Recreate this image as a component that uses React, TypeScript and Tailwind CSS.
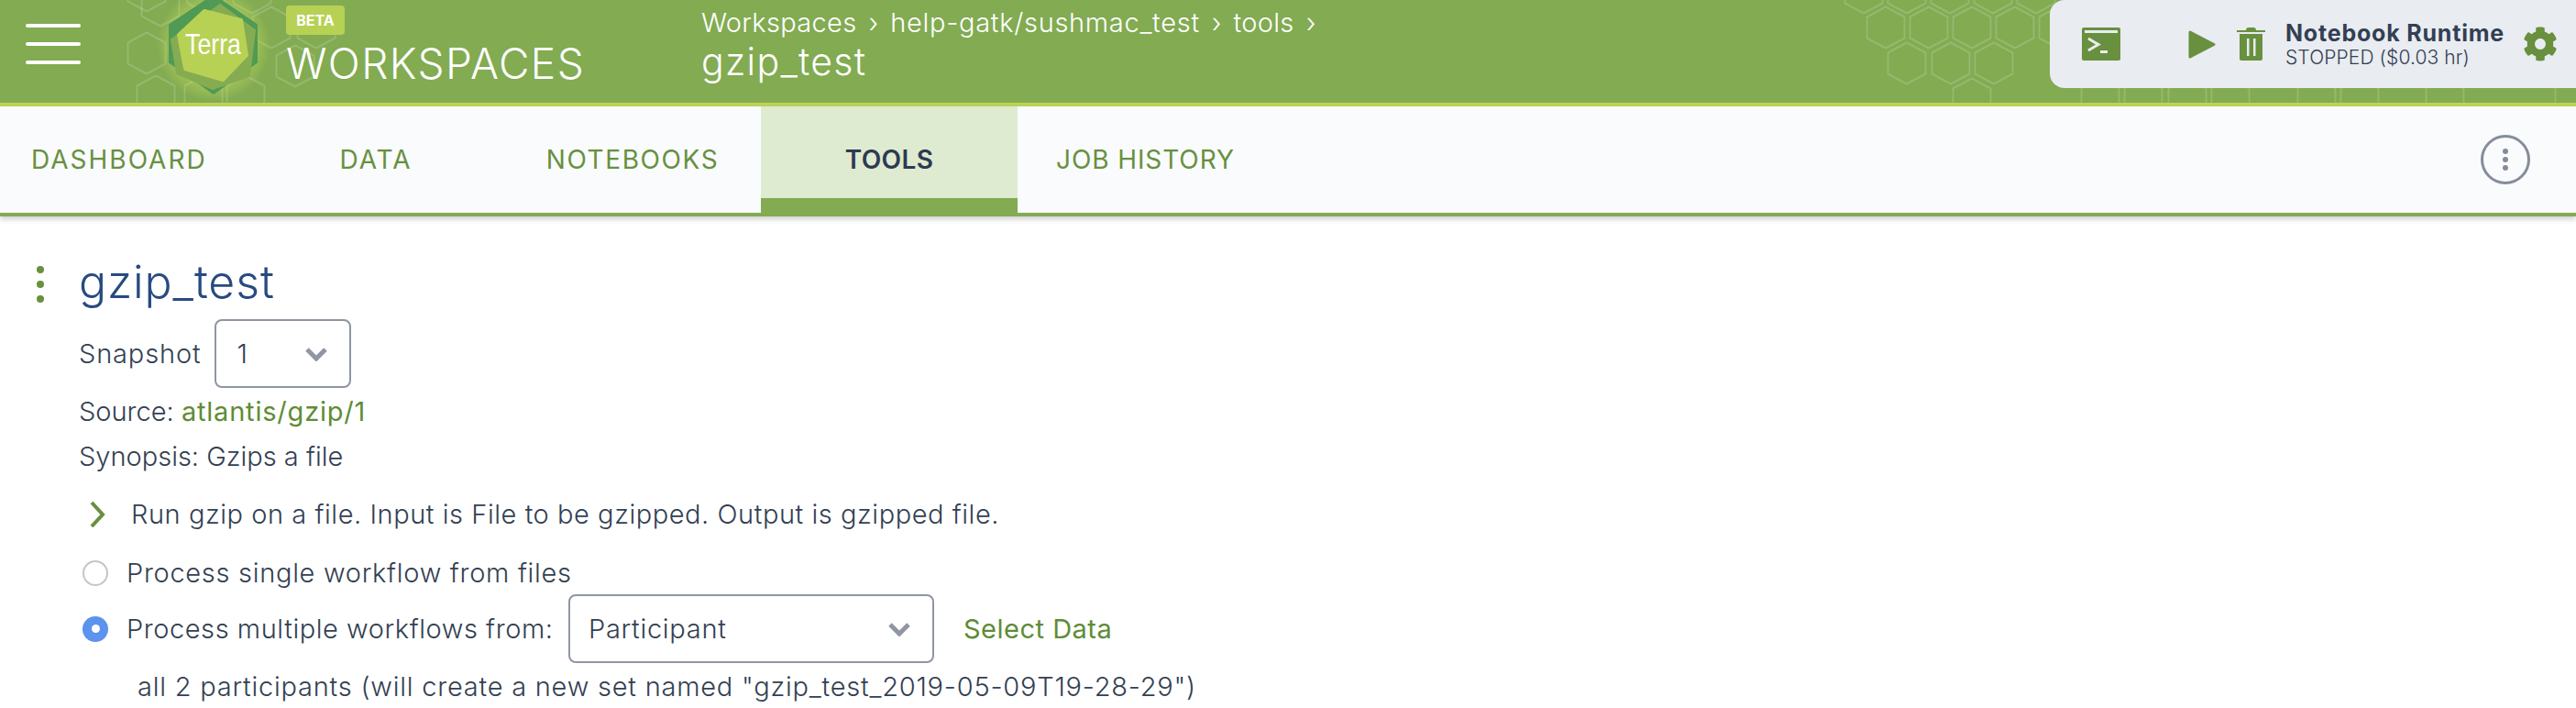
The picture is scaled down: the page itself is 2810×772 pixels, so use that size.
import React from "react";
import { FaCog } from "react-icons/fa";

const rightHexes: [number, number][] = [
  [2033, -8], [2080, -8], [2127, -8], [2174, -8], [2221, -8],
  [2057, 30], [2104, 30], [2151, 30], [2198, 30], [2245, 30],
  [2080, 69], [2128, 69], [2175, 69],
  [2151, 108], [2291, 108], [2338, 108], [2386, 108], [2433, 108], [2527, 108], [2574, 108], [2667, 108], [2808, 108],
];
const leftHexes: [number, number][] = [
  [160, 58], [160, -10], [170, 105], [222, 105], [268, 105], [296, 30], [345, 30], [322, 72], [275, -8], [225, -8], [175, 6],
];

function hexPath(cx: number, cy: number) {
  const w = 20.5, h = 22.5, s = 11;
  return `M${cx} ${cy - h}L${cx + w} ${cy - h + s}V${cy + h - s}L${cx} ${cy + h}L${cx - w} ${cy + h - s}V${cy - h + s}Z`;
}

function Chevron({ className }: { className: string }) {
  return (
    <svg viewBox="0 0 24 16" className={className} fill="none" stroke="#9096a3" strokeWidth="5">
      <path d="M2 3l10 10L22 3" />
    </svg>
  );
}

function Logo() {
  return (
    <svg viewBox="0 0 130 116" className="w-[130px] h-[116px] shrink-0">
      <defs>
        <radialGradient id="glow">
          <stop offset="0.65" stopColor="#c7dd5c" stopOpacity="0.55" />
          <stop offset="1" stopColor="#c7dd5c" stopOpacity="0" />
        </radialGradient>
      </defs>
      <circle cx="67" cy="52" r="62" fill="url(#glow)" />
      <path d="M67 -2L114 30V71L67 105L19 71V30Z" fill="#4f9a55" stroke="#4f9a55" strokeWidth="2" strokeLinejoin="round" />
      <path d="M74 8L112 36L106 86L66 100L27 83L21 46Z" fill="#86ac52" stroke="#86ac52" strokeWidth="2" strokeLinejoin="round" />
      <path d="M57 15L97 25L103 63L77 90L36 78L29 41Z" fill="#b7d155" stroke="#b7d155" strokeWidth="4" strokeLinejoin="round" />
      <text x="36" y="62" fill="#ffffff" fontSize="32" textLength="61" lengthAdjust="spacingAndGlyphs" style={{ fontFamily: '"Liberation Sans Narrow","Liberation Sans",sans-serif' }}>Terra</text>
    </svg>
  );
}

export default function App() {
  return (
    <div className="w-[2810px] h-[772px] overflow-hidden bg-white text-[#333f52] font-['Inter','Liberation_Sans',sans-serif] font-light">
      <header className="relative h-[116px] bg-[#82ab52] border-b-4 border-[#bfd355] text-white flex items-start overflow-hidden">
        <svg className="absolute inset-0 w-[2810px] h-[112px]" viewBox="0 0 2810 112" fill="none" stroke="#ffffff" strokeOpacity="0.16" strokeWidth="2" strokeLinejoin="round">
          {[...rightHexes, ...leftHexes].map(([x, y]) => (
            <path key={`${x}-${y}`} d={hexPath(x, y)} />
          ))}
        </svg>
        <div className="relative ml-[28px] mt-[26px] w-[60px] flex flex-col gap-4 shrink-0">
          <div className="h-1 rounded-sm bg-white" />
          <div className="h-1 rounded-sm bg-white" />
          <div className="h-1 rounded-sm bg-white" />
        </div>
        <div className="relative ml-[78px] mt-0 -translate-y-[3px]"><Logo /></div>
        <div className="relative ml-[16px] mt-[6px] w-[340px] shrink-0 flex flex-col items-start">
          <div className="w-[64px] h-[32px] rounded bg-[#b7d155] text-[16px] font-bold flex items-center justify-center">BETA</div>
          <div className="mt-[4px] text-[46px] leading-[54px] whitespace-nowrap font-light tracking-[1.4px]">WORKSPACES</div>
        </div>
        <div className="relative ml-[113px] mt-[7px] flex flex-col">
          <div className="flex items-center text-[29px] leading-[36px] tracking-[0.3px] font-light whitespace-nowrap">
            <span>Workspaces</span><span className="mx-[13px]">›</span><span className="tracking-[0.7px]">help-gatk/sushmac_test</span><span className="mx-[13px]">›</span><span>tools</span><span className="ml-[13px]">›</span>
          </div>
          <div className="text-[41px] leading-[48px] font-light tracking-[1.3px]">gzip_test</div>
        </div>
        <div className="relative ml-auto w-[574px] h-[96px] bg-[#e9ecf1] rounded-l-2xl flex items-center">
          <svg viewBox="0 0 42 36" className="ml-[35px] w-[42px] h-[36px] shrink-0">
            <rect width="42" height="36" rx="2" fill="#68903e" />
            <rect x="3" y="3" width="36" height="3" fill="#e9ecf1" />
            <path d="M7 12l11 6.5L7 25" fill="none" stroke="#e9ecf1" strokeWidth="3" />
            <rect x="20" y="25" width="8" height="3" fill="#e9ecf1" />
          </svg>
          <svg viewBox="0 0 30 31" className="ml-[74px] w-[30px] h-[31px] shrink-0">
            <path d="M2 2L28 15.5L2 29Z" fill="#68903e" stroke="#68903e" strokeWidth="3" strokeLinejoin="round" />
          </svg>
          <svg viewBox="0 0 31 36" className="ml-[23px] w-[31px] h-[36px] shrink-0">
            <path d="M10 3q0-3 3-3h5q3 0 3 3h10v2H0V3ZM3 7h25v27q0 2-2 2H5q-2 0-2-2Z" fill="#68903e" />
            <rect x="11" y="12" width="2.5" height="19" fill="#e9ecf1" />
            <rect x="18" y="12" width="2.5" height="19" fill="#e9ecf1" />
          </svg>
          <div className="ml-[22px] flex flex-col text-[#333f52] w-[244px] shrink-0">
            <div className="text-[25px] leading-[30px] font-bold whitespace-nowrap tracking-[0.8px]">Notebook Runtime</div>
            <div className="text-[21px] leading-[24px] font-light whitespace-nowrap tracking-[0.1px]">STOPPED ($0.03 hr)</div>
          </div>
          <FaCog className="ml-[15px] w-[38px] h-[38px] text-[#68903e] shrink-0" />
        </div>
      </header>

      <nav className="h-[120px] bg-[#f9fbfd] border-b-4 border-[#82ab52] shadow-[0_3px_6px_rgba(0,0,0,0.2)] flex items-stretch text-[#68903e] text-[28px] tracking-[2px] font-normal relative">
        <div className="w-[270px] pl-[34px] flex items-center">DASHBOARD</div>
        <div className="w-[280px] flex items-center justify-center">DATA</div>
        <div className="w-[280px] flex items-center justify-center tracking-[1.6px]">NOTEBOOKS</div>
        <div className="w-[280px] bg-[#deebd1] border-b-[16px] border-[#82ab52] pt-[16px] flex items-center justify-center font-semibold text-[#2e3a50] tracking-[0.4px]">TOOLS</div>
        <div className="pl-[42px] flex items-center tracking-[0.9px]">JOB HISTORY</div>
        <div className="ml-auto mr-[50px] self-center w-[54px] h-[54px] rounded-full border-[3px] border-[#858c9b] flex flex-col items-center justify-center gap-[3px]">
          <span className="w-[6px] h-[6px] rounded-full bg-[#858c9b]" />
          <span className="w-[6px] h-[6px] rounded-full bg-[#858c9b]" />
          <span className="w-[6px] h-[6px] rounded-full bg-[#858c9b]" />
        </div>
      </nav>

      <main className="text-[29px] tracking-[0.7px]">
        <div className="flex items-center h-[70px] mt-[36px]">
          <div className="ml-[40px] w-[8px] flex flex-col gap-[8px] translate-y-[3px]">
            <span className="w-[8px] h-[8px] rounded-full bg-[#68903e]" />
            <span className="w-[8px] h-[8px] rounded-full bg-[#68903e]" />
            <span className="w-[8px] h-[8px] rounded-full bg-[#68903e]" />
          </div>
          <h1 className="ml-[38px] text-[50px] leading-[70px] text-[#274b80] font-light tracking-[0.9px]">gzip_test</h1>
        </div>
        <div className="ml-[86px] flex items-center h-[75px] mt-[6px]">
          <span className="tracking-[0.85px]">Snapshot</span>
          <div className="ml-[15px] w-[149px] h-[75px] rounded-lg border-[2.5px] border-[#8f95a3] bg-white flex items-center justify-between pl-[22px] pr-[24px]">
            <span>1</span>
            <Chevron className="w-[24px] h-[16px]" />
          </div>
        </div>
        <div className="ml-[86px] mt-[6px] h-[40px] flex items-center tracking-[0]">Source:&nbsp;<span className="text-[#5f8c36] font-normal tracking-[0.8px]">atlantis/gzip/1</span></div>
        <div className="ml-[86px] mt-[9px] h-[40px] flex items-center tracking-[0]">Synopsis: Gzips a file</div>
        <div className="ml-[98px] mt-[23px] h-[40px] flex items-center tracking-[0.55px]">
          <svg viewBox="0 0 17 28" className="w-[17px] h-[28px]" fill="none" stroke="#68903e" strokeWidth="4"><path d="M2 1l12 13L2 27" /></svg>
          <span className="ml-[28px]">Run gzip on a file. Input is File to be gzipped. Output is gzipped file.</span>
        </div>
        <div className="ml-[90px] mt-[24px] h-[40px] flex items-center">
          <span className="w-[28px] h-[28px] rounded-full border-2 border-[#c6c6c6] bg-white" />
          <span className="ml-[20px]">Process single workflow from files</span>
        </div>
        <div className="ml-[90px] mt-[3px] h-[75px] flex items-center">
          <span className="w-[28px] h-[28px] rounded-full bg-[#5b93ee] flex items-center justify-center"><span className="w-[9px] h-[9px] rounded-full bg-white" /></span>
          <span className="ml-[20px] w-[482px] whitespace-nowrap tracking-[0.55px]">Process multiple workflows from:</span>
          <div className="w-[399px] h-[75px] rounded-lg border-[2.5px] border-[#8f95a3] bg-white flex items-center justify-between pl-[20px] pr-[24px]">
            <span>Participant</span>
            <Chevron className="w-[24px] h-[16px]" />
          </div>
          <span className="ml-[32px] text-[#5f8c36] font-normal tracking-[0.5px]">Select Data</span>
        </div>
        <div className="ml-[150px] mt-[6px] h-[40px] flex items-center whitespace-nowrap tracking-[0.77px]">all 2 participants (will create a new set named "gzip_test_2019-05-09T19-28-29")</div>
      </main>
    </div>
  );
}
